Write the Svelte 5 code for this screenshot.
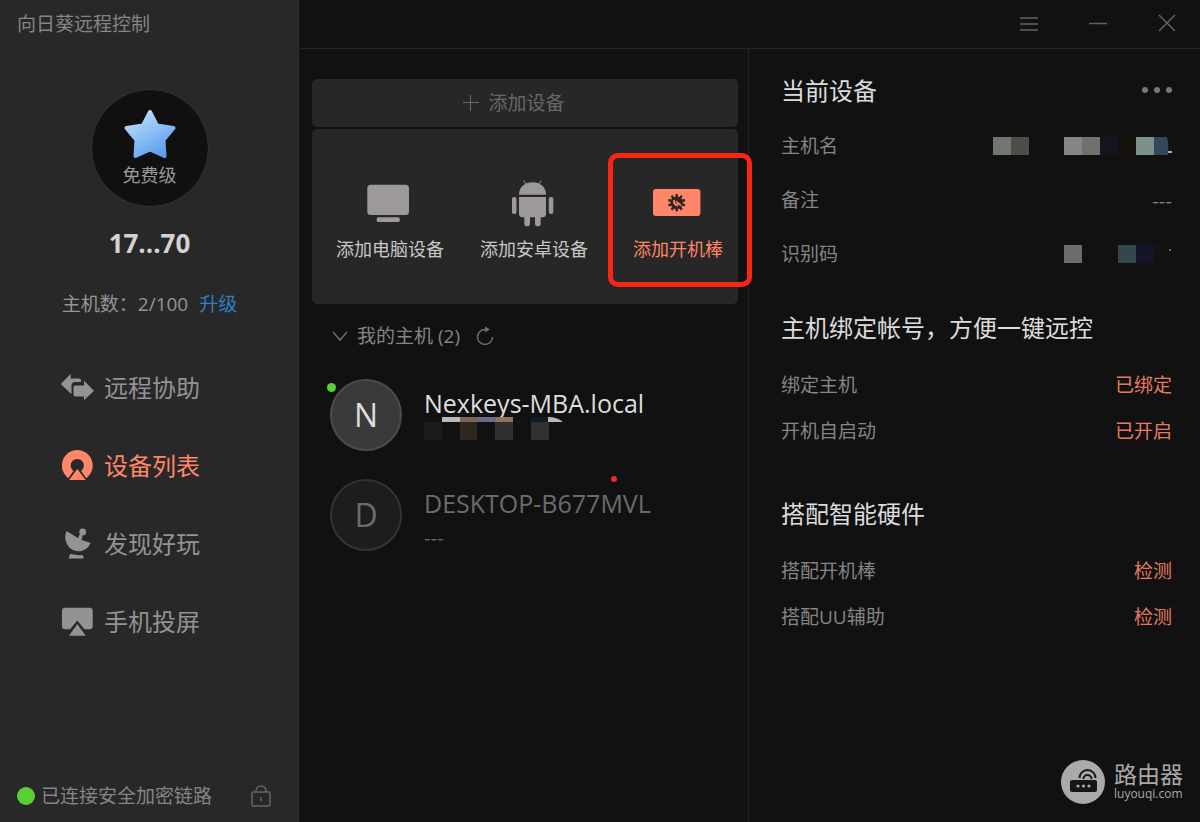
<script>
  const navItems = [
    { id: 'assist', label: '远程协助' },
    { id: 'devices', label: '设备列表' },
    { id: 'discover', label: '发现好玩' },
    { id: 'cast', label: '手机投屏' },
  ];

  const addItems = [
    { id: 'pc', label: '添加电脑设备' },
    { id: 'android', label: '添加安卓设备' },
    { id: 'stick', label: '添加开机棒' },
  ];

  const sections = [
    {
      title: '主机绑定帐号，方便一键远控',
      rows: [
        { label: '绑定主机', action: '已绑定' },
        { label: '开机自启动', action: '已开启' },
      ],
    },
    {
      title: '搭配智能硬件',
      rows: [
        { label: '搭配开机棒', action: '检测' },
        { label: '搭配UU辅助', action: '检测' },
      ],
    },
  ];

  const gearTeeth = [0, 36, 72, 108, 144, 180, 216, 252, 288, 324];

  let active = $state('devices');
  let highlighted = $state('stick');
  let open = $state(true);
</script>

<div class="app">
  <aside class="sidebar">
    <div class="app-title">向日葵远程控制</div>
    <div class="level">
      <svg width="54" height="50" viewBox="0 0 54 50" aria-hidden="true">
        <defs>
          <linearGradient id="star" x1="0" y1="0" x2="0.6" y2="1">
            <stop offset="0" stop-color="#c4e6fa" />
            <stop offset="0.6" stop-color="#8abcf5" />
            <stop offset="1" stop-color="#62a0ee" />
          </linearGradient>
        </defs>
        <path
          d="M27 3 L34 16.5 L50.5 19 L40.5 31 L41.5 47 L27 40.5 L12.5 47 L13.5 31 L3.5 19 L20 16.5 Z"
          fill="url(#star)" stroke="url(#star)" stroke-width="4" stroke-linejoin="round"
        />
      </svg>
      <span>免费级</span>
    </div>
    <div class="account">17...70</div>
    <div class="quota">主机数：2/100 <a href="#upgrade">升级</a></div>

    <nav>
      {#each navItems as item}
        <button class="nav-item" class:active={active === item.id} onclick={() => (active = item.id)}>
          <svg width="34" height="34" viewBox="0 0 34 34" fill="currentColor" aria-hidden="true">
            {#if item.id === 'assist'}
              <path d="M0.7 13 L10.7 3 V7.5 H19 Q21 7.5 21 9.5 V11 H15 Q11.5 11 11.5 14.5 V22.5 H10.7 Z" />
              <path d="M13.5 16.5 Q13.5 14.5 15.5 14.5 H24 V9.8 L34 19.7 L24 29.3 V25.5 H15.5 Q13.5 25.5 13.5 23.5 Z" />
            {:else if item.id === 'devices'}
              <circle cx="17.3" cy="16.5" r="11" fill="none" stroke="currentColor" stroke-width="8.8" />
              <path d="M17.3 16.5 L29.5 34 H5 Z" fill="#282828" />
              <path d="M17.3 20 L25.7 31 H9 Z" />
            {:else if item.id === 'discover'}
              <path d="M6.5 4 L18 11 L20.5 6 L23 7 L21.5 13 L30.7 16 C27.5 23 20 26.5 13 23 C6 19.5 3.5 11 6.5 4 Z" />
              <circle cx="22.7" cy="4.9" r="3.4" />
              <path d="M11 27 Q16 28.5 22 28 Q23.5 28 23.5 31.5 H9 Q9 27 11 27 Z" />
            {:else}
              <rect x="2" y="2.7" width="30.7" height="21.6" rx="3" />
              <path d="M17.3 15.5 L27.5 28 H7 Z" fill="#282828" />
              <path d="M17.3 19 L25.7 30.7 H9 Z" />
            {/if}
          </svg>
          {item.label}
        </button>
      {/each}
    </nav>

    <footer>
      <span class="online"></span>
      <span class="link-state">已连接安全加密链路</span>
      <svg width="20" height="22" viewBox="0 0 20 22" fill="none" stroke="#646464" stroke-width="1.5" aria-hidden="true">
        <rect x="1" y="7" width="18" height="14" rx="1.5" />
        <path d="M5 7 Q5 1 10 1 Q15 1 15 7 M10 12 V16" />
      </svg>
    </footer>
  </aside>

  <div class="content">
    <header>
      <button aria-label="菜单">
        <svg width="20" height="20" viewBox="0 0 20 20"><path d="M1 4 H19 M1 10 H19 M1 16 H19" /></svg>
      </button>
      <button aria-label="最小化">
        <svg width="20" height="20" viewBox="0 0 20 20"><path d="M1 9.5 H19" /></svg>
      </button>
      <button aria-label="关闭">
        <svg width="20" height="20" viewBox="0 0 20 20"><path d="M2 1 L18 17 M18 1 L2 17" /></svg>
      </button>
    </header>

    <div class="columns">
      <main>
        <button class="add">
          <svg width="16" height="16" viewBox="0 0 16 16" aria-hidden="true"><path d="M0 7.5 H16 M7.5 0 V16" stroke="currentColor" /></svg>
          添加设备
        </button>

        <div class="add-panel">
          {#each addItems as item}
            <button class="add-item" class:highlighted={highlighted === item.id} onclick={() => (highlighted = item.id)}>
              <svg width="48" height="48" viewBox="0 0 48 48" fill="currentColor" aria-hidden="true">
                {#if item.id === 'pc'}
                  <rect x="1.3" y="5.7" width="41.7" height="30.3" rx="3.5" />
                  <rect x="10.7" y="38.3" width="23" height="4.7" rx="1.5" />
                {:else if item.id === 'android'}
                  <path d="M9 15.7 C9 8 15 3.3 22.5 3.3 C30 3.3 36 8 36 15.7 Z" />
                  <path d="M9 18 H36 V35 Q36 38.3 32.5 38.3 H12.5 Q9 38.3 9 35 Z" />
                  <rect x="2" y="18" width="4.5" height="17" rx="2" />
                  <rect x="38.8" y="18" width="4.5" height="17" rx="2" />
                  <path d="M14.3 37 H20 V44.5 A2.85 2.85 0 0 1 14.3 44.5 Z M25 37 H30.7 V44.5 A2.85 2.85 0 0 1 25 44.5 Z" />
                  <path d="M13.7 1.5 L17 6.5 M31.3 1.5 L28 6.5" stroke="currentColor" />
                {:else}
                  <rect x="-1" y="10" width="47.4" height="27" rx="3" />
                  <g fill="#33241f">
                    <circle cx="22.7" cy="23.7" r="6.3" />
                    {#each gearTeeth as angle}
                      <rect x="21.5" y="15" width="2.4" height="4" transform="rotate({angle} 22.7 23.7)" />
                    {/each}
                  </g>
                  <path d="M20 21 Q19.5 26 24 26.5 M22 22.5 L27 26.5" fill="none" stroke="currentColor" stroke-width="1.8" />
                {/if}
              </svg>
              {item.label}
            </button>
          {/each}
        </div>

        <button class="group" aria-expanded={open} onclick={() => (open = !open)}>
          <svg width="16" height="16" viewBox="0 0 16 16" aria-hidden="true"><path d="M1 4 L8 12 L15 4" /></svg>
          我的主机 (2)
          <svg class="refresh" width="18" height="20" viewBox="0 0 18 20" aria-hidden="true">
            <path d="M10 3.5 H9 A7.5 7.5 0 1 0 16.5 11" />
            <path d="M9 0.5 L14 3.5 L9 6.5 Z" fill="#6e6e6e" stroke="none" />
          </svg>
        </button>

        {#if open}
          <ul class="hosts">
            <li>
              <div class="avatar on">N<span class="dot"></span></div>
              <div class="host-text">
                <div class="host-name">Nexkeys-MBA.local</div>
              </div>
              <svg class="host-mask" width="142" height="23" viewBox="0 0 142 23" aria-hidden="true">
                <rect x="18" width="18" height="5" fill="#b9b9b9" />
                <rect x="36" width="18" height="5" fill="#796758" />
                <rect x="54" width="18" height="5" fill="#696a84" />
                <rect x="72" width="17" height="5" fill="#8c7460" />
                <rect x="107" width="17" height="5" fill="#101c25" />
                <path d="M124 0 Q133 0 139 5 H124 Z" fill="#b9b9b9" />
                <rect y="5" width="18" height="18" fill="#1a1a1a" />
                <rect x="36" y="5" width="17" height="18" fill="#2e271d" />
                <rect x="71" y="5" width="18" height="18" fill="#303030" />
                <rect x="107" y="5" width="18" height="18" fill="#303131" />
              </svg>
            </li>
            <li>
              <div class="avatar">D</div>
              <div class="host-text offline">
                <div class="host-name">DESKTOP-B677MVL</div>
                <div class="host-note blank">---</div>
              </div>
              <span class="pointer"></span>
            </li>
          </ul>
        {/if}
      </main>

      <section class="detail">
        <div class="detail-head">
          <h2>当前设备</h2>
          <button class="more" aria-label="更多">
            <svg width="31" height="8" viewBox="0 0 31 8"><circle cx="4" cy="3" r="3" /><circle cx="16" cy="3" r="3" /><circle cx="28" cy="3" r="3" /></svg>
          </button>
        </div>
        <div class="row tall">
          <span>主机名</span>
          <svg width="179" height="18" viewBox="0 0 179 18" aria-hidden="true">
            <rect width="18" height="18" fill="#717671" />
            <rect x="18" width="18" height="18" fill="#4e4e49" />
            <rect x="71" width="18" height="18" fill="#858585" />
            <rect x="89" width="18" height="18" fill="#70706f" />
            <rect x="107" width="18" height="18" fill="#141521" />
            <rect x="125" width="18" height="18" fill="#15110d" />
            <rect x="143" width="18" height="18" fill="#7c9188" />
            <path d="M161 0 H174 Q176 8 175 18 H161 Z" fill="#34465a" />
            <rect x="175" y="14" width="4" height="2" fill="#b0b0b0" />
          </svg>
        </div>
        <div class="row tall"><span>备注</span><span class="blank">---</span></div>
        <div class="row tall">
          <span>识别码</span>
          <svg width="108" height="18" viewBox="0 0 108 18" aria-hidden="true">
            <rect width="18" height="18" fill="#6b6b6b" />
            <rect x="54" width="18" height="18" fill="#34474e" />
            <rect x="72" width="18" height="18" fill="#15152a" />
            <rect x="90" width="14" height="18" fill="#15120d" />
            <rect x="105" y="4" width="2" height="2" fill="#666" />
          </svg>
        </div>

        {#each sections as section}
          <h2 class="section-title">{section.title}</h2>
          <div class="rows">
            {#each section.rows as row}
              <div class="row"><span>{row.label}</span><button>{row.action}</button></div>
            {/each}
          </div>
        {/each}
      </section>
    </div>
  </div>

  <div class="watermark">
    <svg width="44" height="44" viewBox="0 0 44 44" aria-hidden="true">
      <circle cx="22" cy="22" r="22" fill="#aaaaaa" />
      <rect x="9" y="20" width="27" height="12" rx="2" fill="#161616" />
      <g fill="none" stroke="#161616" stroke-width="2">
        <path d="M18.5 18 A8 8 0 0 1 34.5 18" />
        <path d="M22.5 19 A4 4 0 0 1 30.5 19" />
      </g>
      <g fill="#aaaaaa"><circle cx="17" cy="26" r="1.6" /><circle cx="22.5" cy="26" r="1.6" /><circle cx="28" cy="26" r="1.6" /></g>
    </svg>
    <div>
      <div class="mark-name">路由器</div>
      <div class="mark-url">luyouqi.com</div>
    </div>
  </div>
</div>

<style>
  :global(body) {
    background: #111111;
  }

  .app {
    position: relative;
    display: flex;
    min-height: 100vh;
    font-family: 'Open Sans', 'Noto Sans CJK SC', sans-serif;
    font-size: 19px;
    line-height: 24px;
    color: #858585;
    background: #111111;
  }

  button {
    padding: 0;
    border: 0;
    background: none;
    color: inherit;
    font: inherit;
    cursor: pointer;
  }

  h2 {
    margin: 0;
    font-size: 24px;
    font-weight: 400;
    line-height: 32px;
    color: #dcdcdc;
  }

  svg {
    display: block;
    flex: none;
    overflow: visible;
  }

  /* sidebar */
  .sidebar {
    box-sizing: border-box;
    display: flex;
    flex-direction: column;
    align-items: center;
    flex: none;
    width: 25%;
    border-right: 1px solid #1a1a1a;
    background: #282828;
  }

  .app-title {
    align-self: stretch;
    padding-left: 17px;
    line-height: 48px;
  }

  .level {
    box-sizing: border-box;
    display: flex;
    flex-direction: column;
    align-items: center;
    gap: 4px;
    width: 118px;
    height: 118px;
    margin-top: 41px;
    padding-top: 19px;
    border: 1px solid #333333;
    border-radius: 50%;
    background: #101010;
    font-size: 18px;
    color: #9a9a9a;
  }

  .account {
    margin-top: 20px;
    font-size: 26px;
    font-weight: 700;
    line-height: 32px;
    color: #d6d2d0;
  }

  .quota {
    margin-top: 33px;
    color: #959595;
  }

  .quota a {
    margin-left: 6px;
    color: #2f7fc4;
    text-decoration: none;
  }

  nav {
    align-self: stretch;
    margin-top: 33px;
  }

  .nav-item {
    display: flex;
    align-items: center;
    gap: 10px;
    width: 100%;
    height: 78px;
    padding-left: 60px;
    font-size: 24px;
    color: #939393;
  }

  .nav-item.active {
    color: #ff8668;
  }

  footer {
    align-self: stretch;
    display: flex;
    align-items: center;
    gap: 6px;
    margin-top: auto;
    padding: 0 28px 14px 17px;
  }

  .link-state {
    flex: 1;
  }

  .online {
    width: 18px;
    height: 18px;
    border-radius: 50%;
    background: #59cf35;
  }

  /* window bar */
  .content {
    display: flex;
    flex-direction: column;
    flex: 1;
  }

  header {
    display: flex;
    align-items: center;
    justify-content: flex-end;
    gap: 49px;
    height: 48px;
    padding-right: 23px;
    border-bottom: 1px solid #242424;
  }

  header svg {
    stroke: #626262;
    stroke-width: 1.5;
  }

  .columns {
    display: grid;
    grid-template-columns: 449fr 451fr;
    flex: 1;
  }

  /* device list */
  main {
    padding: 30px 10px 0 12px;
    border-right: 1px solid #242424;
  }

  .add {
    display: flex;
    align-items: center;
    justify-content: center;
    gap: 9px;
    width: 100%;
    height: 48px;
    padding-right: 22px;
    border-radius: 5px;
    background: #272727;
    color: #686868;
  }

  .add-panel {
    display: flex;
    gap: 36px;
    margin-top: 2px;
    padding: 50px 0 43px 24px;
    border-radius: 5px;
    background: #272727;
  }

  .add-item {
    position: relative;
    display: flex;
    flex-direction: column;
    align-items: center;
    gap: 10px;
    flex: none;
    width: 108px;
    font-size: 18px;
    color: #c8c8c8;
  }

  .add-item svg {
    color: #9d999b;
  }

  .add-item.highlighted,
  .add-item.highlighted svg {
    color: #ff8668;
  }

  .add-item.highlighted::after {
    content: '';
    position: absolute;
    inset: -26px -20px -26px -16px;
    border: 5px solid #fb2516;
    border-radius: 10px;
  }

  .group {
    display: flex;
    align-items: center;
    gap: 9px;
    margin: 20px 0 0 20px;
  }

  .group svg {
    fill: none;
    stroke: #6e6e6e;
    stroke-width: 1.5;
  }

  .refresh {
    margin-left: 7px;
  }

  .hosts {
    display: flex;
    flex-direction: column;
    gap: 28px;
    margin: 31px 0 0 18px;
    padding: 0;
    list-style: none;
  }

  .hosts li {
    position: relative;
    display: flex;
    gap: 22px;
  }

  .avatar {
    position: relative;
    box-sizing: border-box;
    width: 72px;
    height: 72px;
    border: 2px solid #333333;
    border-radius: 50%;
    background: #1d1d1d;
    font-size: 32px;
    line-height: 68px;
    text-align: center;
    color: #6b6b6b;
  }

  .avatar.on {
    border-color: #4b4b4b;
    background: #3a3a3a;
    color: #dedede;
  }

  .dot {
    position: absolute;
    top: 2px;
    left: -5px;
    width: 9px;
    height: 9px;
    border-radius: 50%;
    background: #59cf35;
  }

  .host-text {
    padding-top: 8px;
    color: #dedede;
  }

  .host-text.offline {
    color: #6b6b6b;
  }

  .host-name {
    font-size: 25px;
    line-height: 32px;
  }

  .host-note {
    margin-top: 6px;
  }

  .blank {
    font-family: 'Noto Sans CJK SC', sans-serif;
  }

  .host-mask {
    position: absolute;
    top: 38px;
    left: 94px;
  }

  .pointer {
    position: absolute;
    top: -3px;
    left: 281px;
    width: 6px;
    height: 6px;
    border-radius: 50%;
    background: #ee2a25;
  }

  /* detail */
  .detail {
    padding: 26px 28px 0 32px;
  }

  .detail-head {
    display: flex;
    align-items: center;
    justify-content: space-between;
    margin-bottom: 12px;
  }

  .more {
    fill: #777777;
  }

  .section-title {
    margin-top: 31px;
  }

  .rows {
    margin: 18px 0 44px;
  }

  .rows + .section-title {
    margin-top: 0;
  }

  .row {
    display: flex;
    align-items: center;
    justify-content: space-between;
    height: 46px;
  }

  .row.tall {
    height: 54px;
  }

  .row button {
    color: #e67a61;
  }

  .watermark {
    position: absolute;
    right: 17px;
    bottom: 18px;
    display: flex;
    align-items: center;
    gap: 9px;
    color: #aaaaaa;
  }

  .mark-name {
    font-size: 23px;
    line-height: 24px;
  }

  .mark-url {
    font-size: 12px;
    line-height: 16px;
  }
</style>
